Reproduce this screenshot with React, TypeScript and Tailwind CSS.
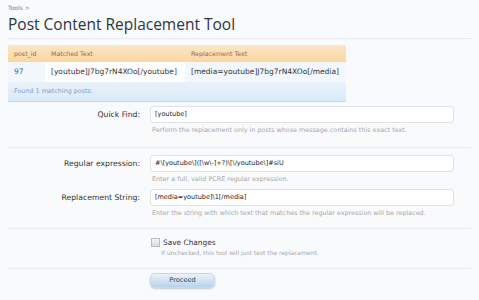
import React from "react"

const small = { fontFamily: '"DejaVu Sans", Verdana, sans-serif' }

function Field({ label, value, help }: { label: string; value: string; help: string }) {
  return (
    <div className="grid grid-cols-[134px_304px] gap-x-2">
      <label className="pt-[3px] pr-[2px] text-right text-[7.7px] text-[#333]">{label}</label>
      <div>
        <div className="flex h-[17px] items-center rounded-[3px] border border-[#dfe3e8] bg-white px-[4px] text-[6.5px] text-[#222]">
          {value}
        </div>
        <p className="mt-[3px] pl-[2px] text-[6.4px] leading-[9px] text-[#a5a8ad]">{help}</p>
      </div>
    </div>
  )
}

export default function App() {
  return (
    <div className="h-[300px] w-[479px] overflow-hidden bg-[#f9fafc] px-2" style={small}>
      <div className="pt-[3px] text-[6px] text-[#6b7f99]">Tools &gt;</div>
      <h1
        className="mt-[2px] border-b border-[#e6eaf0] pb-[4px] text-[15.5px] leading-[20px] text-[#2c3540]"
        style={{ fontFamily: '"Open Sans", sans-serif' }}
      >
        Post Content Replacement Tool
      </h1>

      <div className="mt-[6px] w-[338px]">
        <div className="grid h-[17px] grid-cols-[37px_140px_161px] items-center bg-gradient-to-b from-[#fce6c4] to-[#f8d7a4] text-[6.3px] text-[#a0683a]">
          <span className="pl-[6px]">post_id</span>
          <span className="pl-[6px]">Matched Text</span>
          <span className="pl-[6px]">Replacement Text</span>
        </div>
        <div className="grid h-[20px] grid-cols-[37px_140px_161px] text-[7.5px]">
          <span className="flex items-center bg-[#f1f7fc] pl-[6px] text-[#2f6ba8]">97</span>
          <span className="flex items-center bg-white pl-[6px] text-[#333]">[youtube]J7bg7rN4XOo[/youtube]</span>
          <span className="flex items-center bg-[#f1f7fc] pl-[6px] text-[#333]">[media=youtube]J7bg7rN4XOo[/media]</span>
        </div>
        <div className="flex h-[20px] items-center border-b border-[#c2daee] bg-gradient-to-b from-[#e8f2fb] to-[#d9ebf9] pl-[6px] text-[6.4px] text-[#7ba1c9]">
          Found 1 matching posts.
        </div>
      </div>

      <div className="mt-[4px]">
        <Field
          label="Quick Find:"
          value="[youtube]"
          help="Perform the replacement only in posts whose message contains this exact text."
        />
      </div>
      <div className="mt-[12px] border-t border-[#e8ebef]" />
      <div className="mt-[7px]">
        <Field
          label="Regular expression:"
          value="#\[youtube\]([\w\-]+?)\[\/youtube\]#siU"
          help="Enter a full, valid PCRE regular expression."
        />
      </div>
      <div className="mt-[5px]">
        <Field
          label="Replacement String:"
          value="[media=youtube]\1[/media]"
          help="Enter the string with which text that matches the regular expression will be replaced."
        />
      </div>
      <div className="mt-[10px] border-t border-[#e8ebef]" />

      <div className="ml-[143px] mt-[8px]">
        <label className="flex h-[11px] items-center gap-[3px] text-[7.4px] text-[#333]">
          <span className="inline-block h-[9px] w-[9px] border border-[#b9bcc1] bg-gradient-to-b from-[#f4f4f4] to-[#dcdcdc]" />
          Save Changes
        </label>
        <p className="pl-[10px] text-[6px] leading-[9px] text-[#a5a8ad]">
          If unchecked, this tool will just test the replacement.
        </p>
      </div>
      <div className="mt-[11px] border-t border-[#e8ebef]" />

      <div className="ml-[142px] mt-[4px] flex">
        <button className="h-[15px] w-[65px] rounded-[5px] border border-[#c5d9ea] bg-gradient-to-b from-[#eaf3fb] to-[#b9d3ea] text-[6.6px] text-[#3a4350] shadow-[0_1px_2px_rgba(0,0,0,0.2)]">
          Proceed
        </button>
      </div>
    </div>
  )
}
